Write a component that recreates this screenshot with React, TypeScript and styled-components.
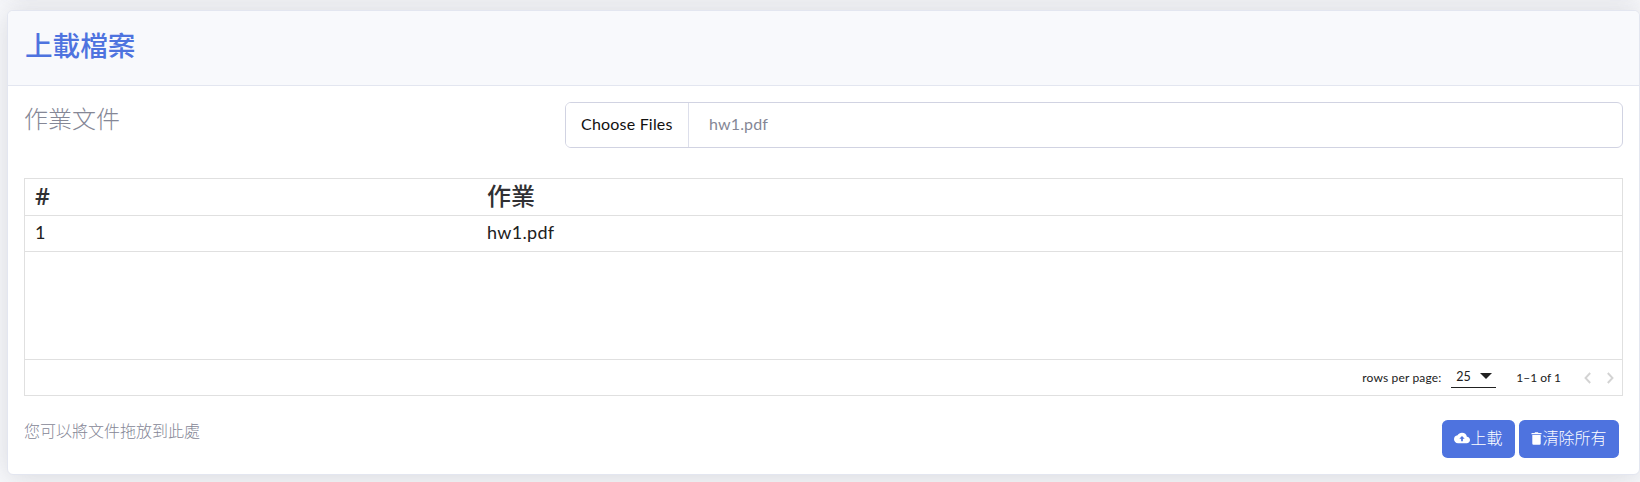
import React from "react";
import styled, { createGlobalStyle } from "styled-components";

const GlobalStyle = createGlobalStyle`
  * { box-sizing: border-box; }
  body {
    margin: 0;
    background: #f8f9fc;
    color: #212121;
    font-family: Lato, "Noto Sans CJK TC", sans-serif;
    font-size: 16px;
    overflow: hidden;
  }
`;

const Page = styled.main`
  height: 482px;
  padding: 0 0 0 7px;
  overflow: hidden;
`;

const Card = styled.section`
  height: 465px;
  display: flex;
  flex-direction: column;
  background: #fff;
  border: 1px solid #e3e6f0;
  border-radius: 6px;
  box-shadow: 0 2.4px 28px rgba(58, 59, 69, 0.17);
  overflow: hidden;
`;

const PreviousCard = styled(Card)`
  height: 100px;
  margin-top: -114px;
  margin-bottom: 24px;
`;

const CardHeader = styled.header`
  height: 75px;
  flex: none;
  padding: 15px 17px 0;
  background: #f8f9fc;
  border-bottom: 1px solid #e3e6f0;
`;

const Title = styled.h3`
  margin: 0;
  color: #4e73df;
  font-size: 27.6px;
  line-height: 40px;
  font-weight: 500;
`;

const CardBody = styled.div`
  flex: 1;
  padding: 16px 16px 0;
`;

const FormRow = styled.div`
  display: grid;
  grid-template-columns: 541px 1fr;
  height: 46px;
`;

const Label = styled.label`
  color: #858796;
  font-size: 24px;
  line-height: 33px;
  font-weight: 300;
`;

const FilePicker = styled.div`
  display: flex;
  align-items: center;
  border: 1px solid #d1d3e2;
  border-radius: 6px;
  overflow: hidden;
`;

const ChooseButton = styled.button`
  width: 123px;
  height: 100%;
  padding: 0 0 3px 15px;
  text-align: left;
  border: 0;
  border-right: 1px solid #dddfeb;
  background: #fff;
  color: #111;
  font: inherit;
  letter-spacing: 0.2px;
`;

const FileName = styled.span`
  padding: 0 0 3px 20px;
  color: #858796;
  letter-spacing: 0.15px;
`;

const Grid = styled.div`
  margin-top: 30px;
  height: 218px;
  display: flex;
  flex-direction: column;
  border: 1px solid #e0e0e0;
`;

const GridRow = styled.div<{ $head?: boolean }>`
  display: grid;
  grid-template-columns: 452px 1fr;
  align-items: center;
  flex: none;
  height: ${(p) => (p.$head ? 37 : 36)}px;
  padding: 0 0 3px 10px;
  border-bottom: 1px solid #e0e0e0;
  font-size: ${(p) => (p.$head ? 24 : 18)}px;
  line-height: 32px;
  font-weight: ${(p) => (p.$head ? 500 : 400)};
  color: ${(p) => (p.$head ? "#303033" : "#212121")};
  letter-spacing: ${(p) => (p.$head ? 0 : 0.3)}px;
`;

const HashHeading = styled.span`
  font-family: "Open Sans", sans-serif;
  font-size: 23px;
  font-weight: 600;
`;

const GridFooter = styled.footer`
  height: 36px;
  margin-top: auto;
  border-top: 1px solid #e0e0e0;
  display: flex;
  align-items: center;
  justify-content: flex-end;
  padding-right: 5px;
  font-size: 12px;
`;

const RowsLabel = styled.span`
  letter-spacing: 0.15px;
`;

const PageSize = styled.div`
  width: 45px;
  height: 20px;
  margin: 0 20px 0 10px;
  padding: 0 4px 2px 5px;
  display: flex;
  align-items: center;
  justify-content: space-between;
  border-bottom: 1px solid #212121;
  font-size: 12.5px;
`;

const Pager = styled.div`
  display: flex;
  gap: 8px;
  margin-left: 20px;
`;

const CardFooter = styled.div`
  display: flex;
  justify-content: space-between;
  align-items: flex-start;
  margin-top: 24px;
  padding-right: 4px;
`;

const Hint = styled.span`
  color: #858796;
  font-weight: 300;
  line-height: 22px;
`;

const Actions = styled.div`
  display: flex;
  gap: 4px;
`;

const Action = styled.button<{ $width: number }>`
  width: ${(p) => p.$width}px;
  height: 38px;
  padding: 0 0 4px;
  display: flex;
  align-items: center;
  justify-content: center;
  border: 0;
  border-radius: 5.6px;
  background: #4e73df;
  color: #fff;
  font: inherit;
  font-weight: 300;

  svg { flex: none; margin-top: 2px; }
`;

const Chevron = ({ d }: { d: string }) => (
  <svg width="14" height="14" viewBox="0 0 14 14" fill="none" stroke="#d3d3d3" strokeWidth="1.9">
    <path d={d} />
  </svg>
);

export default function App() {
  return (
    <>
      <GlobalStyle />
      <Page>
        <PreviousCard />
        <Card>
          <CardHeader>
            <Title>上載檔案</Title>
          </CardHeader>
          <CardBody>
            <FormRow>
              <Label>作業文件</Label>
              <FilePicker>
                <ChooseButton>Choose Files</ChooseButton>
                <FileName>hw1.pdf</FileName>
              </FilePicker>
            </FormRow>
            <Grid>
              <GridRow $head>
                <HashHeading>#</HashHeading>
                <span>作業</span>
              </GridRow>
              <GridRow>
                <span>1</span>
                <span>hw1.pdf</span>
              </GridRow>
              <GridFooter>
                <RowsLabel>rows per page:</RowsLabel>
                <PageSize>
                  <span>25</span>
                  <svg width="12" height="6" viewBox="0 0 12 6"><path d="M0 0h12L6 6z" fill="#212121" /></svg>
                </PageSize>
                <span>1–1 of 1</span>
                <Pager>
                  <Chevron d="M9.200 2 4.500 7l4.700 5" />
                  <Chevron d="M4.800 2 9.500 7l-4.700 5" />
                </Pager>
              </GridFooter>
            </Grid>
            <CardFooter>
              <Hint>您可以將文件拖放到此處</Hint>
              <Actions>
                <Action $width={73}>
                  <svg width="16" height="16" viewBox="0 0 24 24" fill="#fff">
                    <path d="M19.350 10.040A7.490 7.490 0 0 0 12 4C9.110 4 6.600 5.640 5.350 8.040A5.994 5.994 0 0 0 0 14c0 3.310 2.690 6 6 6h13c2.760 0 5-2.240 5-5 0-2.640-2.050-4.780-4.650-4.960zM13.300 13v4h-2.600v-4H8l4-4 4 4z" />
                  </svg>
                  上載
                </Action>
                <Action $width={100}>
                  <svg width="11" height="13" viewBox="0 0 11 13" fill="#fff">
                    <path d="M.5.9h3L4.100.2h2.800l.6.700h3v1.300H.5zM1.300 3h8.400v8.500q0 1.200-1.200 1.200h-6q-1.200 0-1.200-1.200z" />
                  </svg>
                  清除所有
                </Action>
              </Actions>
            </CardFooter>
          </CardBody>
        </Card>
      </Page>
    </>
  );
}
